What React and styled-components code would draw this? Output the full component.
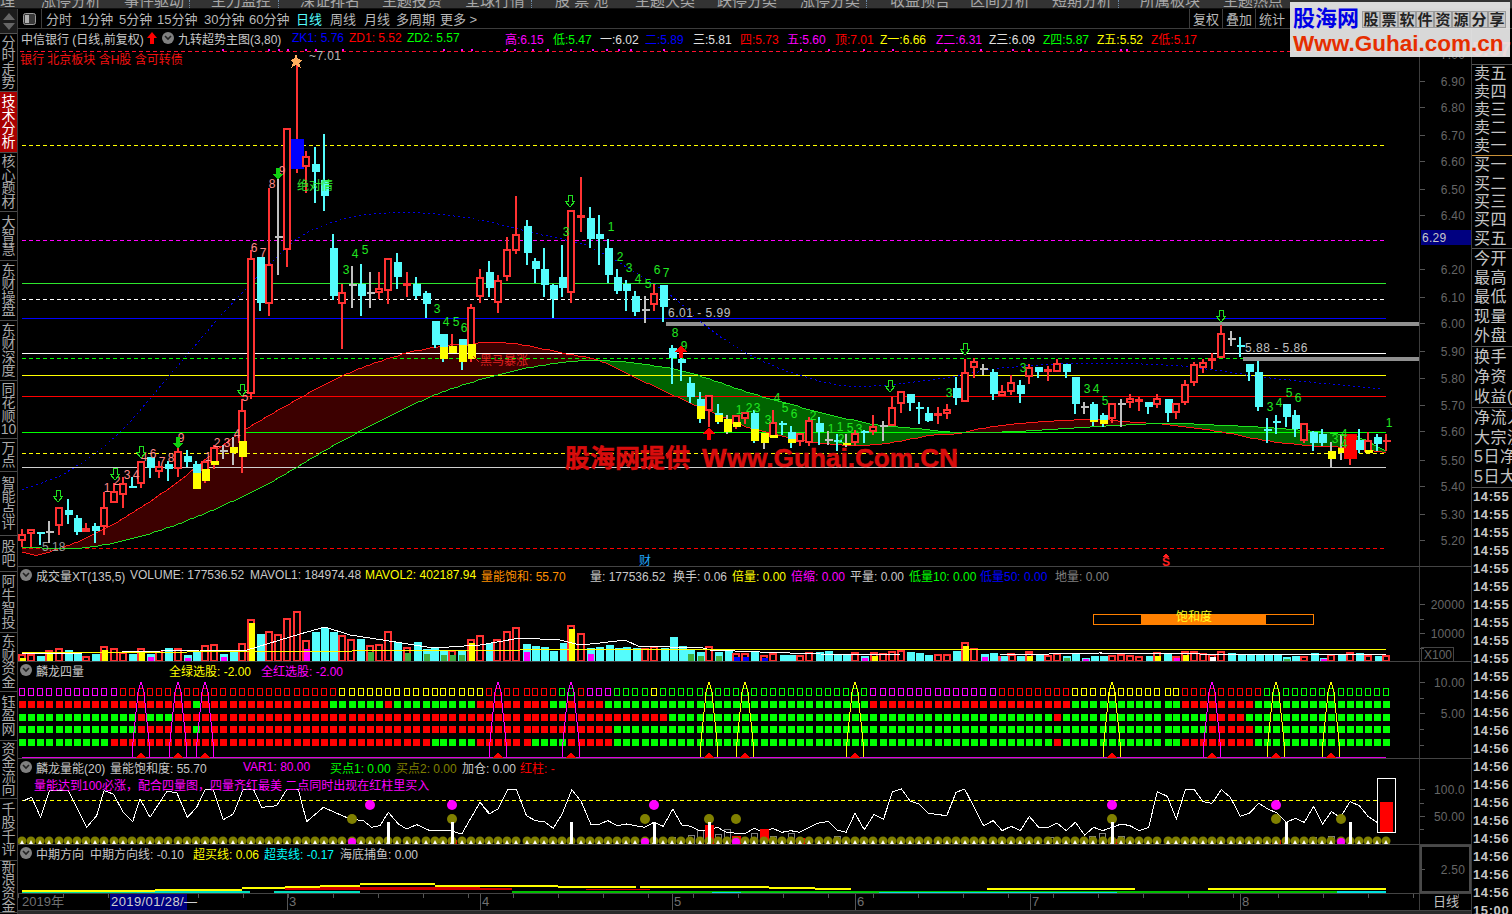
import React from 'react'
import styled, { createGlobalStyle } from 'styled-components'

const FONT = '"Liberation Sans", "Noto Sans CJK SC", sans-serif'

const GlobalStyle = createGlobalStyle`
    html, body {
        margin: 0;
        background: #000;
        overflow: hidden;
        font-family: ${FONT};
    }
`

const Screen = styled.div`
    width: 1512px;
    height: 914px;
    position: relative;
    display: flex;
    flex-direction: column;
    background: #000;
    overflow: hidden;
    color: #c0c0c0;
    font-size: 12px;
`

// top menu is cut by the window edge, only the lower half of the text shows
const TopMenu = styled.div`
    height: 8px;
    display: flex;
    background: #333;
    border-bottom: 1px solid #111;
    overflow: hidden;
    flex: none;
`

const MenuItem = styled.div`
    width: ${p => p.$w}px;
    flex: none;
    font-size: 15px;
    line-height: 15px;
    margin-top: -7px;
    color: #a8a8a8;
    white-space: nowrap;
`

const MenuDot = styled.div`
    width: ${p => p.$w}px;
    flex: none;
    border-left: 1px dotted #6a8aa8;
`

const Body = styled.div`
    flex: 1;
    display: flex;
    min-height: 0;
`

const LeftRail = styled.div`
    width: 17px;
    flex: none;
    border-right: 1px solid #3c3c3c;
    display: flex;
    flex-direction: column;
`

const RailArrows = styled.div`
    height: 24px;
    flex: none;
    background: #1c1c1c;
    border-bottom: 1px solid #555;
    display: flex;
    flex-direction: column;
    align-items: center;
    justify-content: center;
    gap: 3px;
`

const RailTab = styled.div`
    height: ${p => p.$h}px;
    flex: none;
    box-sizing: border-box;
    display: flex;
    flex-direction: column;
    align-items: center;
    justify-content: center;
    border-bottom: 1px solid #4a4a4a;
    background: ${p => (p.$active ? '#a80000' : '#000')};
    color: ${p => (p.$active ? '#fff' : '#a8a8a8')};
    font-size: 14px;
    line-height: 13.5px;
    overflow: hidden;
`

const Workspace = styled.div`
    flex: 1;
    display: flex;
    flex-direction: column;
    min-width: 0;
`

const Toolbar = styled.div`
    height: 19px;
    flex: none;
    box-sizing: content-box;
    display: flex;
    align-items: center;
    border-bottom: 1px solid #3c3c3c;
    background: #000;
    font-size: 13px;
    color: #b8b8b8;
`

const PanelToggle = styled.div`
    width: 23px;
    height: 100%;
    flex: none;
    display: flex;
    align-items: center;
    justify-content: center;
    border-right: 1px solid #3c3c3c;
`

const PeriodTab = styled.div`
    width: ${p => p.$w}px;
    flex: none;
    white-space: nowrap;
    color: ${p => (p.$active ? '#54fcfc' : '#b8b8b8')};
`

const ToolButton = styled.div`
    height: 100%;
    width: 33px;
    flex: none;
    box-sizing: border-box;
    display: flex;
    align-items: center;
    justify-content: center;
    border-left: 1px solid #3c3c3c;
    white-space: nowrap;
`

const Columns = styled.div`
    flex: 1;
    display: flex;
    min-height: 0;
`

const ChartColumn = styled.div`
    width: 1453px;
    flex: none;
    display: flex;
    flex-direction: column;
`

const Panel = styled.div`
    height: ${p => p.$h}px;
    flex: none;
    display: flex;
    box-sizing: border-box;
    border-bottom: 1px solid #444;
`

const PanelChart = styled.div`
    width: 1401px;
    flex: none;
    position: relative;
    overflow: hidden;
`

const PanelAxis = styled.div`
    width: 52px;
    flex: none;
    box-sizing: border-box;
    border-left: 1px solid #3c3c3c;
    overflow: hidden;
`

const ChartSvg = styled.svg`
    display: block;
    shape-rendering: crispEdges;
    font-family: ${FONT};
    font-size: 12px;
`

const Legend = styled.div`
    position: absolute;
    left: 0;
    top: ${p => p.$top || 0}px;
    height: 18px;
    display: flex;
    align-items: center;
    padding-left: ${p => p.$pad || 2}px;
    white-space: nowrap;
    font-size: 12px;
`

const LegendItem = styled.div`
    width: ${p => p.$w}px;
    flex: none;
    color: ${p => p.$c || '#c8c8c8'};
`

const Collapse = styled.span`
    width: 12px;
    height: 12px;
    flex: none;
    border-radius: 50%;
    background: #808080;
    display: inline-flex;
    align-items: center;
    justify-content: center;
    margin: 0 4px 0 ${p => p.$left || 0}px;
`

const TagLine = styled.div`
    position: absolute;
    left: 2px;
    top: 21px;
    color: #f01010;
    font-size: 12px;
    white-space: pre;
`

const DateBar = styled.div`
    height: 16px;
    flex: none;
    display: flex;
    align-items: center;
    border-bottom: 1px solid #444;
    background: repeating-linear-gradient(to right, #555 0 1px, transparent 1px 45px) top left / 100% 4px no-repeat;
    color: #707070;
    font-size: 13px;
`

const DateCell = styled.div`
    width: ${p => p.$w}px;
    height: 100%;
    flex: none;
    box-sizing: border-box;
    padding-left: ${p => p.$pad || 1}px;
    border-left: ${p => (p.$mark ? '1px solid #555' : '0')};
    line-height: 16px;
    white-space: nowrap;
`

const DateSelected = styled(DateCell)`
    background: #000080;
    color: #d0d0d0;
    letter-spacing: 0.4px;
`

const DatePeriod = styled(DateCell)`
    border-left: 1px solid #3c3c3c;
    color: #c0c0c0;
    text-align: center;
`

const BottomStrip = styled.div`
    flex: 1;
    background: #2a2a2a;
`

const QuoteColumn = styled.div`
    width: 41px;
    flex: none;
    box-sizing: border-box;
    border-left: 1px solid #3c3c3c;
    display: flex;
    flex-direction: column;
    overflow: hidden;
    font-size: 16px;
    color: #c4c4c4;
`

const QuotePrice = styled.div`
    height: 36px;
    flex: none;
    box-sizing: border-box;
    padding-top: 8px;
    font-size: 20px;
    font-weight: bold;
    line-height: 24px;
    color: #ff3030;
    border-bottom: 1px solid #555;
`

const QuoteGroup = styled.div`
    flex: none;
    box-sizing: border-box;
    height: ${p => p.$h}px;
    border-bottom: 1px solid ${p => p.$line || '#555'};
    display: flex;
    flex-direction: column;
    justify-content: space-around;
    padding-left: 2px;
`

const QuoteRow = styled.div`
    white-space: nowrap;
    line-height: 18px;
    letter-spacing: 0.5px;
`

const TimeRow = styled.div`
    height: 18px;
    flex: none;
    line-height: 18px;
    padding-left: 1px;
    font-size: 13px;
    font-weight: bold;
    letter-spacing: 0.6px;
    color: #c8c8c8;
`

const LogoBadge = styled.div`
    position: absolute;
    left: 1290px;
    top: 2px;
    width: 220px;
    height: 55px;
    box-sizing: border-box;
    padding: 5px 0 0 3px;
    background: rgba(232, 232, 232, 0.93);
    overflow: hidden;
    z-index: 5;
`

const LogoTop = styled.div`
    display: flex;
    align-items: center;
    height: 24px;
`

const LogoName = styled.div`
    width: 69px;
    flex: none;
    font-size: 22px;
    line-height: 24px;
    font-weight: bold;
    color: #0000e6;
    white-space: nowrap;
`

const LogoChar = styled.div`
    width: 18px;
    height: 17px;
    flex: none;
    box-sizing: border-box;
    border: 1px solid #9a9a9a;
    background: #c8c8c8;
    color: #222;
    font-size: 15px;
    line-height: 15px;
    font-weight: bold;
    text-align: center;
`

const LogoUrl = styled.div`
    font-size: 22.5px;
    line-height: 26px;
    font-weight: bold;
    color: #e62e00;
    white-space: nowrap;
`

// x, high, body top, body bottom, low, kind, split
const CANDLES = [
    [22, 529, 534, 541, 547, 'r'], [31, 529, 529, 534, 547, 'r'], [40, 532, 532, 534, 545, 'c'],
    [49, 521, 532, 532, 543, 'd'], [59, 507, 507, 526, 535, 'r'], [68, 499, 510, 515, 524, 'c'],
    [77, 515, 518, 532, 535, 'c'], [86, 523, 528, 532, 532, 'r'], [95, 523, 526, 531, 543, 'c'],
    [104, 492, 507, 527, 535, 'r'], [114, 483, 491, 503, 503, 'r'], [123, 477, 483, 495, 508, 'r'],
    [132, 477, 486, 488, 488, 'c'], [141, 461, 461, 484, 488, 'r'], [150, 457, 457, 468, 478, 'c'],
    [159, 461, 466, 472, 478, 'r'], [168, 461, 464, 469, 481, 'c'], [178, 445, 451, 469, 477, 'r'],
    [187, 450, 456, 462, 467, 'c'], [196, 461, 464, 489, 489, 'cy', 473], [205, 461, 461, 481, 483, 'ry', 469],
    [214, 445, 447, 465, 469, 'ry', 461], [223, 445, 451, 451, 459, 'd'], [233, 437, 447, 453, 465, 'y'],
    [242, 399, 410, 457, 473, 'ry', 441], [251, 250, 258, 394, 399, 'r'], [260, 257, 257, 303, 311, 'c'],
    [269, 188, 264, 304, 316, 'r'], [278, 175, 237, 237, 275, 'd'], [287, 128, 128, 250, 267, 'r'],
    [297, 63, 139, 169, 173, 'B'], [306, 151, 156, 167, 193, 'r'], [315, 147, 164, 172, 203, 'c'],
    [324, 134, 180, 196, 211, 'c'], [333, 234, 248, 296, 300, 'c'], [342, 284, 292, 304, 349, 'r'],
    [352, 266, 285, 285, 308, 'd'], [361, 264, 284, 296, 316, 'c'], [370, 272, 293, 293, 308, 'd'],
    [379, 272, 288, 293, 299, 'r'], [388, 258, 258, 291, 304, 'r'], [397, 253, 262, 277, 289, 'c'],
    [407, 272, 283, 285, 297, 'r'], [416, 277, 284, 296, 299, 'c'], [426, 291, 293, 304, 318, 'c'],
    [435, 321, 321, 345, 348, 'c'], [443, 334, 334, 359, 362, 'cy', 347], [452, 334, 346, 353, 353, 'ry', 346],
    [462, 339, 339, 362, 370, 'cy', 345], [471, 304, 307, 359, 362, 'ry', 344], [480, 269, 277, 297, 303, 'r'],
    [489, 261, 272, 288, 297, 'c'], [498, 275, 280, 303, 313, 'r'], [507, 237, 249, 277, 281, 'r'],
    [516, 196, 234, 251, 254, 'r'], [527, 220, 226, 253, 265, 'c'], [535, 258, 261, 269, 283, 'c'],
    [544, 248, 269, 285, 297, 'c'], [553, 284, 285, 299, 318, 'c'], [562, 245, 277, 288, 297, 'c'],
    [571, 210, 210, 293, 303, 'r'], [581, 177, 215, 218, 232, 'r'], [590, 207, 218, 239, 248, 'c'],
    [599, 215, 234, 239, 265, 'c'], [608, 239, 248, 275, 283, 'c'], [617, 269, 277, 291, 294, 'c'],
    [626, 280, 284, 291, 311, 'c'], [635, 291, 296, 312, 316, 'c'], [645, 296, 310, 310, 323, 'd'],
    [654, 284, 293, 305, 311, 'r'], [663, 285, 285, 307, 322, 'c'], [672, 345, 348, 358, 384, 'c'],
    [681, 350, 359, 363, 381, 'c'], [690, 377, 383, 397, 403, 'c'], [700, 392, 399, 419, 423, 'cy', 406],
    [709, 395, 395, 411, 427, 'r'], [718, 404, 413, 422, 424, 'cy', 415], [727, 415, 419, 432, 434, 'y'],
    [736, 415, 415, 427, 429, 'ry', 422], [745, 412, 412, 419, 424, 'r'], [754, 410, 413, 441, 443, 'cy', 429],
    [764, 433, 433, 443, 449, 'y'], [773, 410, 422, 438, 438, 'ry', 435], [782, 421, 424, 424, 435, 'e'],
    [791, 426, 432, 443, 448, 'cy', 439], [800, 433, 433, 442, 446, 'r'], [809, 417, 420, 443, 446, 'r'],
    [819, 417, 423, 432, 445, 'c'], [828, 431, 440, 440, 445, 'd'], [837, 434, 441, 441, 451, 'e'],
    [846, 434, 443, 445, 447, 'y'], [855, 430, 433, 443, 446, 'r'], [864, 430, 432, 432, 443, 'e'],
    [873, 415, 426, 432, 435, 'r'], [883, 421, 426, 426, 441, 'd'], [892, 397, 407, 426, 426, 'r'],
    [901, 391, 391, 404, 413, 'r'], [910, 394, 394, 403, 411, 'c'], [919, 402, 408, 408, 424, 'e'],
    [928, 407, 413, 421, 422, 'c'], [938, 407, 413, 415, 424, 'r'], [947, 404, 409, 414, 419, 'r'],
    [956, 377, 388, 398, 405, 'c'], [965, 359, 372, 402, 402, 'r'], [974, 358, 361, 368, 378, 'r'],
    [983, 364, 369, 369, 375, 'd'], [993, 369, 372, 394, 400, 'c'], [1002, 385, 391, 396, 396, 'r'],
    [1011, 375, 382, 392, 395, 'r'], [1020, 380, 385, 394, 403, 'c'], [1029, 364, 367, 377, 384, 'r'],
    [1038, 367, 367, 372, 378, 'c'], [1048, 366, 369, 372, 381, 'r'], [1057, 359, 363, 372, 372, 'r'],
    [1066, 364, 364, 372, 378, 'c'], [1075, 377, 377, 404, 414, 'c'], [1084, 402, 407, 407, 414, 'd'],
    [1093, 402, 404, 422, 426, 'cy', 420], [1103, 413, 415, 424, 427, 'cy', 420], [1112, 403, 403, 419, 423, 'r'],
    [1121, 399, 404, 404, 427, 'd'], [1130, 394, 398, 403, 408, 'r'], [1139, 397, 399, 401, 411, 'r'],
    [1148, 402, 402, 407, 414, 'c'], [1157, 394, 398, 405, 408, 'r'], [1168, 399, 399, 413, 422, 'c'],
    [1176, 403, 403, 413, 419, 'r'], [1185, 380, 384, 403, 405, 'r'], [1194, 362, 364, 383, 386, 'r'],
    [1203, 359, 362, 368, 373, 'r'], [1212, 353, 358, 361, 369, 'r'], [1221, 325, 333, 358, 358, 'r'],
    [1231, 331, 339, 339, 346, 'd'], [1240, 337, 346, 346, 357, 'e'], [1249, 364, 364, 372, 381, 'c'],
    [1258, 361, 372, 407, 411, 'c'], [1267, 418, 430, 430, 443, 'e'], [1276, 415, 422, 422, 434, 'e'],
    [1286, 404, 404, 417, 427, 'c'], [1295, 410, 415, 429, 437, 'c'], [1304, 423, 423, 441, 443, 'r'],
    [1313, 431, 432, 443, 451, 'c'], [1322, 429, 434, 443, 446, 'c'], [1331, 442, 451, 459, 467, 'y'],
    [1341, 435, 448, 453, 460, 'y'], [1350, 434, 434, 459, 465, 'R'], [1359, 429, 440, 450, 453, 'c'],
    [1368, 432, 440, 453, 453, 'ry', 450], [1377, 434, 437, 444, 451, 'c'], [1386, 434, 441, 441, 451, 'D']
]

const XS = CANDLES.map(c => c[0])

const RED = '#ff3232'
const CYAN = '#54fcfc'

const Candle = ({ data }) => {
    const [x, high, top, bottom, low, kind, split] = data
    if (kind === 'd' || kind === 'e' || kind === 'D') {
        const color = kind === 'd' ? '#c0c0c0' : kind === 'e' ? CYAN : RED
        return (
            <g fill={color}>
                <rect x={x - 1} y={high} width={2} height={low - high} />
                <rect x={x - 3} y={top - 1} width={8} height={2} />
            </g>
        )
    }
    if (kind === 'B' || kind === 'R') {
        return (
            <g>
                <rect x={x - 1} y={high} width={2} height={low - high} fill={RED} />
                <rect x={x - 6} y={top} width={13} height={bottom - top} fill={kind === 'B' ? '#0000ff' : '#ff0000'} />
            </g>
        )
    }
    const isRed = kind === 'r' || kind === 'ry'
    return (
        <g>
            <rect x={x - 1} y={high} width={2} height={low - high} fill={kind === 'y' ? '#c0c0c0' : isRed ? RED : CYAN} />
            {kind === 'r' && <rect x={x - 3} y={top + 1} width={6} height={Math.max(bottom - top - 2, 1)} fill="#000" stroke={RED} strokeWidth={2} />}
            {kind === 'c' && <rect x={x - 3} y={top} width={8} height={bottom - top} fill={CYAN} />}
            {kind === 'y' && <rect x={x - 3} y={top} width={8} height={bottom - top} fill="#ffff00" />}
            {kind === 'cy' && (
                <g>
                    <rect x={x - 3} y={top} width={8} height={split - top} fill={CYAN} />
                    <rect x={x - 3} y={split} width={8} height={bottom - split} fill="#ffff00" />
                </g>
            )}
            {kind === 'ry' && (
                <g>
                    <rect x={x - 3} y={top + 1} width={6} height={split - top} fill="#000" stroke={RED} strokeWidth={2} />
                    <rect x={x - 3} y={split} width={8} height={bottom - split} fill="#ffff00" />
                </g>
            )}
        </g>
    )
}

const H_LINES = [
    [145, '#ffff00', true], [240, '#ff00ff', true], [283, '#2ee62e'], [299, '#ffffff', true],
    [318, '#0000ff'], [353, '#ffffff'], [358, '#00ff00', true], [375, '#ffff00'], [396, '#ff0000'],
    [432, '#00ff00'], [453, '#ffff00', true], [467, '#d0d0d0'], [548, '#ff0000', true]
]

const MA_BLUE = [[22, 490], [67, 472], [117, 435], [170, 375], [217, 320], [267, 267], [300, 237], [340, 220], [380, 213], [430, 213], [480, 220], [530, 232], [590, 247], [647, 280], [680, 303], [707, 327], [750, 355], [793, 373], [840, 385], [883, 385], [950, 377], [1000, 368], [1077, 363], [1173, 365], [1223, 371], [1263, 377], [1323, 383], [1385, 389]]
const MA_RED = [[22, 552], [38, 555], [97, 533], [167, 490], [233, 438], [300, 398], [340, 377], [390, 358], [430, 348], [470, 343], [510, 343], [563, 353], [597, 360], [630, 375], [677, 397], [730, 420], [750, 428], [800, 440], [850, 445], [887, 443], [933, 435], [960, 433], [983, 428], [1033, 422], [1100, 419], [1123, 421], [1163, 424], [1223, 432], [1263, 440], [1307, 445], [1357, 448], [1387, 453]]
const MA_GREEN = [[22, 547], [90, 547], [167, 528], [260, 488], [340, 442], [430, 397], [490, 377], [543, 365], [597, 360], [663, 367], [700, 376], [750, 393], [800, 407], [867, 423], [913, 428], [960, 432], [1017, 431], [1100, 426], [1167, 423], [1223, 425], [1277, 428], [1357, 437], [1387, 452]]

const toPoints = pts => pts.map(p => p.join(',')).join(' ')

// hermite through the read-off points, the moving averages are smooth curves
const curveAt = (pts, x) => {
    let i = 1
    while (i < pts.length - 1 && x > pts[i][0]) i++
    const [x0, y0] = pts[i - 1]
    const [x1, y1] = pts[i]
    const prev = pts[Math.max(i - 2, 0)]
    const next = pts[Math.min(i + 1, pts.length - 1)]
    const m0 = (y1 - prev[1]) / (x1 - prev[0])
    const m1 = (next[1] - y0) / (next[0] - x0)
    const w = x1 - x0
    const t = Math.min(Math.max((x - x0) / w, 0), 1)
    const t2 = t * t
    const t3 = t2 * t
    return (2 * t3 - 3 * t2 + 1) * y0 + (t3 - 2 * t2 + t) * w * m0 + (-2 * t3 + 3 * t2) * y1 + (t3 - t2) * w * m1
}

const sample = (pts, from, to) => {
    const out = []
    for (let x = from; x <= to; x += 4) out.push([x, Math.round(curveAt(pts, x))])
    return out
}

const ribbon = (from, to) => {
    const top = sample(MA_RED, from, to)
    const bottom = sample(MA_GREEN, from, to).reverse()
    return toPoints(top.concat(bottom))
}

const RIBBONS = [[22, 598, '#3c0000'], [598, 960, '#006400'], [960, 1166, '#3c0000'], [1166, 1386, '#006400']]

const GREEN_LABELS = [
    [355, 253, '4'], [365, 249, '5'], [346, 269, '3'], [437, 308, '3'], [446, 321, '4'], [456, 321, '5'], [464, 327, '6'],
    [566, 231, '3'], [611, 226, '1'], [620, 256, '2'], [629, 267, '3'], [638, 278, '4'], [648, 283, '5'], [657, 269, '6'],
    [666, 272, '7'], [675, 332, '8'], [684, 345, '9'], [739, 409, '1'], [749, 407, '2'], [757, 407, '3'], [768, 419, '3'],
    [777, 397, '4'], [785, 407, '5'], [794, 413, '6'], [813, 415, '2'], [831, 428, '1'], [840, 426, '1'], [841, 438, '2'],
    [850, 427, '5'], [859, 428, '3'], [949, 392, '3'], [1023, 367, '3'], [1087, 388, '3'], [1096, 388, '4'], [1105, 400, '5'],
    [1270, 406, '3'], [1279, 402, '4'], [1289, 392, '5'], [1298, 397, '6'], [1335, 438, '3'], [1344, 433, '4'], [1344, 443, '4'],
    [1389, 422, '1']
]

const PINK_LABELS = [
    [107, 487, '1'], [117, 480, '2'], [127, 474, '3'], [136, 474, '4'], [144, 456, '4'], [153, 453, '6'], [162, 461, '7'],
    [171, 457, '8'], [181, 437, '9'], [208, 456, '1'], [217, 442, '2'], [227, 442, '3'], [237, 433, '4'], [245, 396, '5'],
    [254, 247, '6'], [263, 252, '7'], [272, 183, '8'], [282, 170, '9']
]

const HOLLOW_ARROWS = [[58, 497], [115, 475], [141, 453], [242, 391], [570, 202], [965, 350], [890, 387], [1221, 317]]
const FILLED_ARROWS = [[178, 444], [278, 175]]
const UP_ARROWS = [[681, 351], [709, 433]]
const TOP_DOTS = [222, 268, 278, 287, 305, 315, 342, 443, 461, 471, 506, 514, 532, 547, 570, 592, 606, 618, 630, 663, 800, 828, 863, 892, 945, 980, 1012, 1028, 1080, 1120, 1126]

const arrowDown = (x, y) => `${x - 2},${y - 7} ${x + 2},${y - 7} ${x + 2},${y - 1} ${x + 5},${y - 1} ${x},${y + 5} ${x - 5},${y - 1} ${x - 2},${y - 1}`
const arrowUp = (x, y) => `${x},${y - 6} ${x + 6},${y + 1} ${x + 2},${y + 1} ${x + 2},${y + 7} ${x - 2},${y + 7} ${x - 2},${y + 1} ${x - 6},${y + 1}`

const MainChart = () => (
    <ChartSvg width={1401} height={537} viewBox="18 29 1401 537">
        {RIBBONS.map(r => <polygon key={r[0]} points={ribbon(r[0], r[1])} fill={r[2]} />)}
        <line x1={20} x2={1418} y1={51} y2={51} stroke="#ff1030" strokeDasharray="4 3" />
        {TOP_DOTS.map(x => <rect key={x} x={x} y={49} width={2} height={2} fill="#ff00ff" />)}
        {H_LINES.map(l => (
            <line key={l[0]} x1={22} x2={1386} y1={l[0] + 0.5} y2={l[0] + 0.5} stroke={l[1]} strokeDasharray={l[2] ? '4 3' : undefined} />
        ))}
        <rect x={666} y={322} width={753} height={4} fill="#909090" />
        <rect x={1243} y={357} width={176} height={4} fill="#909090" />
        <polyline points={toPoints(sample(MA_BLUE, 22, 1385))} fill="none" stroke="#0000e8" strokeDasharray="2 3" />
        <polyline points={toPoints(sample(MA_RED, 22, 1386))} fill="none" stroke="#ff1818" />
        <polyline points={toPoints(sample(MA_GREEN, 22, 1386))} fill="none" stroke="#20e020" />
        {CANDLES.map(c => <Candle key={c[0]} data={c} />)}
        {GREEN_LABELS.map(l => <text key={`${l[0]}-${l[1]}`} x={l[0]} y={l[1] + 5} textAnchor="middle" fill="#20e820">{l[2]}</text>)}
        {PINK_LABELS.map(l => <text key={`${l[0]}-${l[1]}`} x={l[0]} y={l[1] + 5} textAnchor="middle" fill="#ff8a8a">{l[2]}</text>)}
        {HOLLOW_ARROWS.map(a => <polygon key={a[0]} points={arrowDown(a[0], a[1])} fill="#000" stroke="#20e020" />)}
        {FILLED_ARROWS.map(a => <polygon key={a[0]} points={arrowDown(a[0], a[1])} fill="#10d010" />)}
        {UP_ARROWS.map(a => <polygon key={a[0]} points={arrowUp(a[0], a[1])} fill="#ff0000" />)}
        <text x={668} y={317} fill="#c0c0c0" letterSpacing="0.5">6.01 - 5.99</text>
        <text x={1245} y={352} fill="#c0c0c0" letterSpacing="0.5">5.88 - 5.86</text>
        <text x={297} y={190} fill="#30e830">绝对情</text>
        <polyline points="473,356 479,362" fill="none" stroke="#e02020" />
        <text x={480} y={365} fill="#e02020">黑马暴涨</text>
        <polygon points="296,54 298,59 302,60 299,63 301,68 296,65 291,68 293,63 290,60 294,59" fill="#ffb060" />
        <text x={309} y={60} fill="#b8b8b8" letterSpacing="0.4">~7.01</text>
        <text x={42} y={551} fill="#9a9a9a">5.18</text>
        <text x={565} y={467} fontSize="25" fontWeight="bold" fill="#d80c0c" stroke="#d80c0c" strokeWidth="0.5" textLength="125" lengthAdjust="spacingAndGlyphs">股海网提供</text>
        <text x={702} y={467} fontSize="26" fontWeight="bold" fill="#d80c0c" stroke="#d80c0c" strokeWidth="0.5" textLength="256" lengthAdjust="spacingAndGlyphs">Www.Guhai.Com.CN</text>
        <text x={639} y={565} fill="#20a8ff">财</text>
        <polygon points="1166,553 1169,557 1163,557" fill="#ff2020" />
        <text x={1166} y={566} textAnchor="middle" fill="#ff2020" fontWeight="bold">S</text>
    </ChartSvg>
)

// bars are read off three crops of the volume pane, each with its own offset
const fromLeft = [
    [67, 283, 'ry'], [93, 283, 'r'], [121, 290, 'c'], [148, 273, 'ry'], [177, 267, 'r'], [205, 273, 'c'], [232, 285, 'c'], [258, 290, 'r'],
    [286, 285, 'c'], [312, 261, 'ry'], [342, 267, 'r'], [369, 278, 'r'], [397, 285, 'c'], [424, 267, 'ry'], [451, 283, 'cm'], [478, 276, 'r'],
    [505, 265, 'c'], [534, 267, 'r'], [562, 287, 'cm'], [589, 275, 'c'], [616, 258, 'r'], [643, 255, 'r'], [670, 283, 'cm'], [700, 275, 'c'],
    [726, 252, 'r'], [753, 180, 'ry'], [781, 225, 'c'], [807, 215, 'r'], [834, 225, 'r'], [861, 177, 'r'], [890, 155, 'r'], [918, 242, 'rm'],
    [946, 217, 'c'], [972, 207, 'c'], [1000, 218, 'c'], [1027, 228, 'r'], [1054, 240, 'r'], [1081, 238, 'c'], [1110, 258, 'rg'], [1136, 255, 'r'],
    [1164, 215, 'r'], [1190, 248, 'c'], [1220, 263, 'rg'], [1250, 248, 'c'], [1277, 268, 'cg'], [1303, 263, 'c'], [1330, 275, 'cg'], [1356, 272, 'rg'],
    [1383, 275, 'cg'], [1412, 240, 'ry'], [1440, 228, 'r'], [1468, 250, 'c'], [1492, 240, 'r']
].map(b => [b[0] / 3, (305 - b[1]) / 3, b[2]])

const fromMiddle = [
    [75, 95, 'r'], [100, 85, 'r'], [130, 135, 'cm'], [155, 140, 'c'], [180, 145, 'c'], [205, 155, 'c'], [232, 132, 'c'], [255, 77, 'ry'], [283, 103, 'r'],
    [309, 147, 'cm'], [334, 144, 'c'], [360, 138, 'c'], [385, 147, 'c'], [410, 143, 'c'], [436, 146, 'c'], [461, 148, 'r'], [487, 142, 'r'], [514, 148, 'c'],
    [539, 114, 'c'], [565, 142, 'c'], [589, 150, 'cg'], [617, 158, 'cg'], [641, 142, 'r'], [667, 158, 'cg'], [693, 157, 'c'], [717, 162, 'rb'], [742, 162, 'rb'],
    [768, 159, 'c'], [795, 168, 'rb'], [820, 163, 'r'], [847, 167, 'c'], [872, 167, 'c'], [896, 167, 'r'], [921, 160, 'r'], [950, 159, 'c'], [975, 156, 'c'],
    [1000, 168, 'c'], [1025, 168, 'c'], [1050, 160, 'r'], [1076, 171, 'cm'], [1103, 160, 'ry'], [1128, 163, 'r'], [1153, 155, 'r'], [1178, 154, 'r'], [1205, 160, 'c'],
    [1230, 163, 'c'], [1255, 168, 'c'], [1283, 166, 'r'], [1307, 166, 'r'], [1333, 156, 'c'], [1357, 130, 'ry'], [1383, 148, 'r'], [1410, 165, 'cm'], [1437, 162, 'c'],
    [1462, 170, 'rm'], [1487, 163, 'r'], [1513, 170, 'c'], [1537, 157, 'ry']
].map(b => [480 + b[0] / 2.8, (186 - b[1]) / 3, b[2]])

const fromRight = [
    [-25, 290, 'c'], [0, 285, 'r'], [25, 290, 'c'], [52, 277, 'ry'], [80, 288, 'c'], [108, 288, 'r'], [135, 280, 'r'], [163, 291, 'cg'], [190, 282, 'c'], [218, 295, 'cm'],
    [245, 290, 'c'], [272, 290, 'c'], [300, 288, 'r'], [328, 284, 'r'], [354, 288, 'r'], [381, 290, 'r'], [410, 290, 'c'], [436, 278, 'ry'], [466, 283, 'c'],
    [493, 291, 'rm'], [520, 276, 'ry'], [547, 275, 'r'], [573, 282, 'r'], [600, 283, 'rw'], [628, 275, 'r'], [658, 280, 'c'], [686, 288, 'c'], [713, 288, 'c'],
    [741, 283, 'c'], [768, 286, 'c'], [795, 286, 'c'], [823, 292, 'cg'], [850, 289, 'c'], [877, 290, 'r'], [905, 282, 'c'], [932, 295, 'cm'], [958, 285, 'r'],
    [988, 288, 'c'], [1014, 278, 'r'], [1042, 282, 'c'], [1068, 287, 'r'], [1097, 289, 'c'], [1122, 288, 'r']
].map(b => [1012 + b[0] / 3, (305 - b[1]) / 3, b[2]])

const VOLUMES = [...fromLeft, ...fromMiddle, ...fromRight]

const INNER = { y: '#ffff00', m: '#ff00ff', g: '#40b040', b: '#0000ff', w: '#ffffff' }
const VOL_BOTTOM = 661

const VolumeBar = ({ x: rawX, h, kind }) => {
    const x = Math.round(rawX)
    const y = Math.round(VOL_BOTTOM - h)
    const bar = VOL_BOTTOM - y
    const inner = kind[1]
    const innerH = inner === 'y' ? Math.max(bar - 4, 2) : Math.round(Math.max(bar * 0.55, 2))
    return (
        <g>
            {kind[0] === 'c'
                ? <rect x={x - 3} y={y} width={8} height={bar} fill={CYAN} />
                : <rect x={x - 3} y={y + 1} width={6} height={Math.max(bar - 1, 1)} fill="#000" stroke={RED} strokeWidth={2} />}
            {inner && <rect x={x - 2} y={VOL_BOTTOM - innerH} width={6} height={innerH} fill={INNER[inner]} />}
        </g>
    )
}

const VOL_WHITE = [[22, 654], [83, 653], [200, 650], [247, 650], [300, 634], [325, 627], [350, 635], [383, 640], [433, 648], [480, 645], [520, 638], [540, 639], [560, 640], [580, 645], [600, 643], [625, 640], [640, 647], [660, 646], [680, 648], [700, 647], [710, 650], [760, 652], [820, 654], [900, 655], [1000, 655], [1100, 653], [1200, 654], [1386, 655]]

const VolumeChart = () => (
    <ChartSvg width={1401} height={94} viewBox="18 567 1401 94">
        {VOLUMES.map((b, i) => <VolumeBar key={i} x={b[0]} h={b[1]} kind={b[2]} />)}
        <polyline points={toPoints(VOL_WHITE)} fill="none" stroke="#ffffff" />
        <polyline points="22,653 520,650 1386,649" fill="none" stroke="#ffff00" />
        <rect x={1093.5} y={614.5} width={220} height={10} fill="#000" stroke="#ff8000" />
        <rect x={1141} y={615} width={125} height={9} fill="#ff8000" />
        <text x={1194} y={621} textAnchor="middle" fill="#ffff20">饱和度</text>
    </ChartSvg>
)

const MAGENTA = '#ff00ff'
const GREEN = '#00ff00'
const RED_CELL = '#ff0000'
const YELLOW = '#ffff00'

// colour bands by x, each pair is [up to x, colour]
const band = (stops, x) => stops.find(s => x < s[0])[1]

const GRID_ROWS = [
    { y: 689, hollow: true, stops: [[118, MAGENTA], [338, RED_CELL], [485, YELLOW], [558, RED_CELL], [577, GREEN], [586, RED_CELL], [613, MAGENTA], [650, GREEN], [658, YELLOW], [869, GREEN], [998, MAGENTA], [1071, RED_CELL], [1181, YELLOW], [1262, RED_CELL], [9999, GREEN]] },
    { y: 701, stops: [[192, RED_CELL], [201, GREEN], [330, RED_CELL], [385, GREEN], [392, RED_CELL], [476, GREEN], [549, RED_CELL], [567, GREEN], [604, RED_CELL], [869, GREEN], [1071, RED_CELL], [1181, GREEN], [1253, RED_CELL], [9999, GREEN]] },
    { y: 714, stops: [[137, GREEN], [146, RED_CELL], [172, GREEN], [668, RED_CELL], [1053, GREEN], [1061, RED_CELL], [1208, GREEN], [1244, RED_CELL], [9999, GREEN]] },
    { y: 726, stops: [[137, GREEN], [192, RED_CELL], [201, GREEN], [613, RED_CELL], [1208, GREEN], [1253, RED_CELL], [9999, GREEN]] },
    { y: 739, stops: [[112, GREEN], [431, RED_CELL], [476, GREEN], [532, RED_CELL], [567, GREEN], [613, RED_CELL], [1053, GREEN], [1061, RED_CELL], [1181, GREEN], [1253, RED_CELL], [9999, GREEN]] }
]

const PEAKS = [[141, MAGENTA], [178, MAGENTA], [205, MAGENTA], [498, MAGENTA], [571, MAGENTA], [709, YELLOW], [745, YELLOW], [855, YELLOW], [1112, YELLOW], [1212, MAGENTA], [1276, YELLOW], [1331, YELLOW]]

const peakOutline = x => [[x - 9, 757], [x - 8, 742], [x - 6, 722], [x - 4, 703], [x - 3, 692], [x, 682], [x + 3, 692], [x + 4, 703], [x + 6, 722], [x + 8, 742], [x + 9, 757]]

const FourChart = () => (
    <ChartSvg width={1401} height={96} viewBox="18 662 1401 96">
        {GRID_ROWS.map(row => XS.map(x => (
            row.hollow
                ? <rect key={x} x={x - 2.5} y={row.y - 0.5} width={5} height={7} fill="none" stroke={band(row.stops, x)} strokeWidth={1.5} />
                : <rect key={x} x={x - 3} y={row.y} width={7} height={7} fill={band(row.stops, x)} />
        )))}
        {PEAKS.map(p => <polyline key={p[0]} points={toPoints(peakOutline(p[0]))} fill="none" stroke={p[1]} />)}
        <line x1={22} x2={1386} y1={757.5} y2={757.5} stroke="#e000e0" />
        {PEAKS.map(p => <polygon key={p[0]} points={`${p[0]},752 ${p[0] + 5},758 ${p[0] - 5},758`} fill="#ff0000" />)}
    </ChartSvg>
)

const ENERGY_LEFT = [[68, 726], [95, 715], [122, 775], [148, 695], [205, 695], [260, 805], [290, 770], [312, 695], [340, 705], [370, 760], [398, 788], [420, 720], [450, 775], [500, 698], [530, 700], [562, 775], [590, 745], [615, 692], [640, 692], [670, 782], [700, 765], [730, 690], [760, 690], [785, 745], [830, 740], [860, 692], [895, 692], [920, 788], [970, 745], [1050, 780], [1090, 785], [1115, 805], [1140, 800], [1165, 760], [1195, 795], [1220, 810], [1250, 797], [1290, 815], [1350, 815], [1385, 825], [1440, 730], [1470, 765]].map(p => [p[0] / 3, 560 + p[1] / 3])
const ENERGY_MID = [[0, 100], [25, 135], [50, 120], [78, 62], [102, 62], [130, 140], [155, 155], [180, 158], [205, 178], [230, 135], [257, 62], [283, 97], [310, 165], [335, 165], [358, 155], [385, 170], [410, 165], [460, 175], [487, 160], [513, 172], [540, 120], [565, 168], [590, 172], [615, 185], [640, 183], [665, 175], [690, 190], [740, 195], [768, 178], [795, 190], [820, 178], [845, 190], [870, 185], [895, 190], [945, 163], [975, 157], [1000, 183], [1025, 190], [1050, 133], [1076, 182], [1103, 137], [1130, 150], [1155, 68], [1180, 60], [1205, 97], [1230, 105], [1255, 133], [1307, 140], [1333, 70], [1357, 60], [1410, 170], [1437, 155], [1462, 185], [1487, 172], [1513, 185]].map(p => [480 + p[0] / 2.8, 770 + p[1] / 3])
const ENERGY_RIGHT = [[25, 815], [52, 772], [80, 805], [108, 805], [135, 792], [163, 815], [190, 790], [218, 828], [245, 805], [272, 815], [300, 805], [328, 795], [354, 800], [381, 815], [410, 805], [436, 698], [466, 712], [493, 780], [520, 692], [547, 692], [573, 728], [600, 733], [628, 692], [655, 715], [685, 772], [713, 762], [740, 733], [768, 750], [795, 762], [823, 790], [850, 778], [877, 790], [905, 742], [932, 795], [958, 758], [985, 775], [1014, 728], [1042, 740], [1068, 772], [1095, 790]].map(p => [1012 + p[0] / 3, 560 + p[1] / 3])
const ENERGY_LINE = [...ENERGY_LEFT, ...ENERGY_MID, ...ENERGY_RIGHT]

const STICKS = [388, 452, 571, 654, 709, 1112, 1286, 1350]
const MAGENTA_DOTS = [370, 452, 654, 1112, 1276]
const OLIVE_DOTS = [352, 452, 645, 709, 736, 1112, 1276, 1341]
const LOW_DOTS = [352, 645, 736, 1341]
const GREY_BOXES = [[672, 838], [691, 836], [700, 831], [718, 835], [727, 830], [754, 834], [773, 837], [791, 834], [837, 837], [1092, 837], [1102, 834], [1121, 837], [1313, 838], [1331, 837], [1050, 838]]
const RED_BLOCKS = [[709, 826, 19], [736, 837, 8], [764, 830, 12], [800, 839, 6], [452, 841, 4], [1112, 840, 5], [1276, 841, 4]]

const EnergyChart = () => (
    <ChartSvg width={1401} height={85} viewBox="18 760 1401 85">
        <line x1={22} x2={1386} y1={801.5} y2={801.5} stroke="#ffff00" strokeDasharray="4 3" />
        {GREY_BOXES.map(b => <rect key={b[0]} x={b[0] - 3} y={b[1]} width={6} height={845 - b[1]} fill="none" stroke="#808080" />)}
        <polyline points={toPoints(ENERGY_LINE)} fill="none" stroke="#ffffff" />
        {RED_BLOCKS.map(b => <rect key={b[0]} x={b[0] - 4} y={b[1]} width={9} height={b[2]} fill="#ff0000" />)}
        <g shapeRendering="auto">
            {XS.map(x => <circle key={x} cx={x} cy={842} r={4.5} fill="#808000" />)}
            {XS.map(x => <polygon key={x} points={`${x},841 ${x + 2},845 ${x - 2},845`} fill="#ffffff" />)}
            {MAGENTA_DOTS.map(x => <circle key={x} cx={x} cy={806} r={5} fill="#ff00ff" />)}
            {OLIVE_DOTS.map(x => <circle key={x} cx={x} cy={820} r={5} fill="#808000" />)}
            {LOW_DOTS.map(x => <circle key={x} cx={x} cy={843} r={4} fill="#ff00ff" />)}
        </g>
        {STICKS.map(x => <rect key={x} x={x - 1} y={823} width={3} height={22} fill="#ffffff" />)}
        <rect x={1377.5} y={779.5} width={18} height={54} fill="#000" stroke="#ffffff" />
        <rect x={1380} y={803} width={13} height={30} fill="#ff0000" />
        <text x={34} y={791} fill="#ff00ff">量能达到100必涨，配合四量图，四量齐红最美 二点同时出现在红柱里买入</text>
    </ChartSvg>
)

const DIR_BANDS = [
    [22, 137, 892, 1, '#00e0a0'], [137, 250, 892, 1, '#00e0c0'], [274, 360, 892, 1, '#00e0c0'],
    [512, 1386, 892, 1, '#00c000'], [712, 741, 893, 1, '#00e0e0'], [741, 879, 893, 1, '#00d020'],
    [879, 1117, 893, 1, '#00e0e0'], [1117, 1337, 892, 1, '#00c000'], [1337, 1386, 892, 1, '#00e0e0']
]
const DIR_YELLOW = [
    [22, 155, 892], [155, 242, 891], [242, 285, 889], [285, 320, 888], [320, 360, 887], [360, 435, 885], [435, 500, 887],
    [500, 558, 887], [558, 636, 888], [640, 769, 888], [769, 815, 889], [815, 851, 890], [987, 1135, 890], [1208, 1386, 890]
]
const DIR_RED = [[285, 500, 889, 2], [500, 512, 889, 2], [586, 650, 890, 1], [320, 480, 888, 3]]

const DirectionChart = () => (
    <ChartSvg width={1401} height={48} viewBox="18 846 1401 48">
        {DIR_RED.map(b => <rect key={b[0]} x={b[0]} y={b[2]} width={b[1] - b[0]} height={b[3]} fill="#d00000" />)}
        {DIR_BANDS.map(b => <rect key={b[0]} x={b[0]} y={b[2]} width={b[1] - b[0]} height={2} fill={b[4]} />)}
        {DIR_YELLOW.map(b => <rect key={b[0]} x={b[0]} y={b[2] - 1} width={b[1] - b[0]} height={2} fill="#ffff00" />)}
    </ChartSvg>
)

const AxisTicks = ({ top, height, ticks, minor = [], children }) => (
    <ChartSvg width={52} height={height} viewBox={`1419 ${top} 52 ${height}`}>
        {minor.map(y => <line key={y} x1={1419} x2={1423} y1={y + 0.5} y2={y + 0.5} stroke="#555" />)}
        {ticks.map(t => (
            <g key={t[1]}>
                <line x1={1419} x2={1424} y1={t[0] + 0.5} y2={t[0] + 0.5} stroke="#555" />
                <text x={1464} y={t[0] + 5} textAnchor="end" fill="#666" letterSpacing="0.2">{t[1]}</text>
            </g>
        ))}
        {children}
    </ChartSvg>
)

const MAIN_TICKS = [[54, '7.00'], [81, '6.90'], [107, '6.80'], [135, '6.70'], [161, '6.60'], [189, '6.50'], [215, '6.40'], [269, '6.20'], [297, '6.10'], [323, '6.00'], [351, '5.90'], [378, '5.80'], [405, '5.70'], [431, '5.60'], [460, '5.50'], [486, '5.40'], [514, '5.30'], [540, '5.20']]

const MENU = [
    ['理', 0], ['涨停分析', 41], ['事件驱动', 124], ['|', 189], ['主力监控', 210], ['|', 277], ['深证排名', 298], ['主题投资', 380], ['全球行情', 463],
    ['|', 529], ['股 票 池', 552], ['主题大类', 632], ['跌停分类', 714], ['涨停分类', 797], ['|', 863], ['收益预告', 886], ['区间分析', 966], ['短期分析', 1048], ['|', 1114],
    ['所属板块', 1135], ['主题热点', 1218], ['', 1512]
]

const PERIODS = [['分时', 34], ['1分钟', 39], ['5分钟', 38], ['15分钟', 47], ['30分钟', 45], ['60分钟', 47], ['日线', 34, true], ['周线', 34], ['月线', 32], ['多周期', 44], ['更多 >', 60]]

const RAIL = [
    [['分', '时', '走', '势'], 58], [['技', '术', '分', '析'], 61, true], [['核', '心', '题', '材'], 59], [['大', '智', '慧'], 49], [['东', '财', '操', '盘'], 60],
    [['东', '财', '深', '度'], 60], [['同', '花', '顺', '10'], 58], [['万', '点'], 33], [['智', '能', '点', '评'], 64], [['股', '吧'], 36], [['阿', '牛', '智', '投'], 61],
    [['东', '财', '资', '金'], 59], [['钰', '盈', '网'], 49], [['资', '金', '流', '向'], 58], [['千', '股', '千', '评'], 62], [['新', '浪', '资', '金'], 52]
]

const QUOTES = [
    { h: 91, rows: ['卖五', '卖四', '卖三', '卖二', '卖一'], line: '#c89038' },
    { h: 93, rows: ['买一', '买二', '买三', '买四', '买五'] },
    { h: 98, rows: ['今开', '最高', '最低', '现量', '外盘'] },
    { h: 61, rows: ['换手', '净资', '收益(%'] },
    { h: 80, rows: ['净流入', '大宗流', '5日净', '5日大'] }
]

const TIMES = [...Array(11).fill('14:55'), ...Array(12).fill('14:56'), '15:00']

const MAIN_LEGEND = [
    ['ZK1: 5.76', 57, '#0000ff'], ['ZD1: 5.52', 58, '#ff0000'], ['ZD2: 5.57', 98, '#00ff00'],
    ['高:6.15', 48, '#ff00ff'], ['低:5.47', 47, '#00ff00'], ['一:6.02', 45, '#e0e0e0'], ['二:5.89', 48, '#0000ff'], ['三:5.81', 47, '#e0e0e0'],
    ['四:5.73', 47, '#ff0000'], ['五:5.60', 48, '#ff00ff'], ['顶:7.01', 45, '#ff0000'], ['Z一:6.66', 56, '#ffff00'], ['Z二:6.31', 53, '#ff00ff'],
    ['Z三:6.09', 54, '#e0e0e0'], ['Z四:5.87', 54, '#00ff00'], ['Z五:5.52', 54, '#ffff00'], ['Z低:5.17', 50, '#ff0000']
]

const VOL_LEGEND = [
    ['VOLUME: 177536.52', 120], ['MAVOL1: 184974.48', 115], ['MAVOL2: 402187.94', 116, '#ffff00'], ['量能饱和: 55.70', 109, '#ff9000'],
    ['量: 177536.52', 83], ['换手: 0.06', 59], ['倍量: 0.00', 59, '#ffff00'], ['倍缩: 0.00', 59, '#ff00ff'], ['平量: 0.00', 59], ['低量10: 0.00', 71, '#00ff00'],
    ['低量50: 0.00', 75, '#0000ff'], ['地量: 0.00', 70, '#808080']
]

const ChevronDown = () => (
    <svg width="8" height="6" viewBox="0 0 8 6"><polyline points="1,1 4,4 7,1" fill="none" stroke="#222" strokeWidth="1.6" /></svg>
)

const PanelLegend = ({ title, titleWidth, items }) => (
    <Legend $top={-1}>
        <Collapse><ChevronDown /></Collapse>
        <LegendItem $w={titleWidth}>{title}</LegendItem>
        {items.map(item => <LegendItem key={item[0]} $w={item[1]} $c={item[2]}>{item[0]}</LegendItem>)}
    </Legend>
)

const App = () => (
    <Screen>
        <GlobalStyle />
        <TopMenu>
            {MENU.slice(0, -1).map((m, i) => (
                m[0] === '|'
                    ? <MenuDot key={m[1]} $w={MENU[i + 1][1] - m[1]} />
                    : <MenuItem key={m[1]} $w={MENU[i + 1][1] - m[1]}>{m[0]}</MenuItem>
            ))}
        </TopMenu>
        <Body>
            <LeftRail>
                <RailArrows>
                    <svg width="12" height="7" viewBox="0 0 12 7"><polygon points="6,0 12,7 0,7" fill="#666" /></svg>
                    <svg width="12" height="7" viewBox="0 0 12 7"><polygon points="0,0 12,0 6,7" fill="#666" /></svg>
                </RailArrows>
                {RAIL.map(t => (
                    <RailTab key={t[0].join('')} $h={t[1]} $active={t[2]}>
                        {t[0].map((c, i) => <span key={i}>{c}</span>)}
                    </RailTab>
                ))}
            </LeftRail>
            <Workspace>
                <Toolbar>
                    <PanelToggle>
                        <svg width="13" height="12" viewBox="0 0 13 12">
                            <rect x="0.5" y="0.5" width="12" height="11" rx="2" fill="#3a3a3a" stroke="#9a9a9a" />
                            <rect x="2" y="2" width="4" height="8" fill="#b0b0b0" />
                        </svg>
                    </PanelToggle>
                    <PeriodTab $w={4} />
                    {PERIODS.map(p => <PeriodTab key={p[0]} $w={p[1]} $active={p[2]}>{p[0]}</PeriodTab>)}
                    <PeriodTab $w={689} />
                    <ToolButton>复权</ToolButton>
                    <ToolButton>叠加</ToolButton>
                    <ToolButton>统计</ToolButton>
                </Toolbar>
                <Columns>
                    <ChartColumn>
                        <Panel $h={538}>
                            <PanelChart>
                                <MainChart />
                                <Legend $pad={3}>
                                    <LegendItem $w={126}>中信银行 (日线,前复权)</LegendItem>
                                    <svg width="10" height="12" viewBox="0 0 10 12"><polygon points="5,0 10,6 7,6 7,12 3,12 3,6 0,6" fill="#ff0000" /></svg>
                                    <Collapse $left={5}><ChevronDown /></Collapse>
                                    <LegendItem $w={114}>九转超势主图(3,80)</LegendItem>
                                    {MAIN_LEGEND.map(l => <LegendItem key={l[0]} $w={l[1]} $c={l[2]}>{l[0]}</LegendItem>)}
                                </Legend>
                                <TagLine>银行 北京板块 含H股 含可转债</TagLine>
                            </PanelChart>
                            <PanelAxis>
                                <AxisTicks top={29} height={537} ticks={MAIN_TICKS}>
                                    <rect x={1420} y={230} width={51} height={15} fill="#000080" />
                                    <text x={1421} y={242} fill="#c8c8c8" letterSpacing="0.3">6.29</text>
                                </AxisTicks>
                            </PanelAxis>
                        </Panel>
                        <Panel $h={95}>
                            <PanelChart>
                                <VolumeChart />
                                <PanelLegend title="成交量XT(135,5)" titleWidth={94} items={VOL_LEGEND} />
                            </PanelChart>
                            <PanelAxis>
                                <AxisTicks top={567} height={94} ticks={[[604, '20000'], [633, '10000']]} minor={[619, 648]}>
                                    <rect x={1420.5} y={647.5} width={32} height={14} fill="none" stroke="#444" />
                                    <text x={1423} y={659} fill="#666">X100</text>
                                </AxisTicks>
                            </PanelAxis>
                        </Panel>
                        <Panel $h={97}>
                            <PanelChart>
                                <FourChart />
                                <PanelLegend
                                    title="麟龙四量"
                                    titleWidth={133}
                                    items={[['全绿选股: -2.00', 92, '#ffff00'], ['全红选股: -2.00', 100, '#ff00ff']]}
                                />
                            </PanelChart>
                            <PanelAxis>
                                <AxisTicks top={662} height={96} ticks={[[682, '10.00'], [713, '5.00']]} minor={[698, 729, 745]} />
                            </PanelAxis>
                        </Panel>
                        <Panel $h={86}>
                            <PanelChart>
                                <EnergyChart />
                                <PanelLegend
                                    title="麟龙量能(20)"
                                    titleWidth={74}
                                    items={[['量能饱和度: 55.70', 133], ['VAR1: 80.00', 87, '#ff00ff'], ['买点1: 0.00', 66, '#00ff00'], ['买点2: 0.00', 66, '#808000'], ['加仓: 0.00', 58], ['红柱: -', 50, '#ff0000']]}
                                />
                            </PanelChart>
                            <PanelAxis>
                                <AxisTicks top={760} height={85} ticks={[[790, '100.0'], [817, '50.00']]} minor={[804, 830]} />
                            </PanelAxis>
                        </Panel>
                        <Panel $h={49}>
                            <PanelChart>
                                <DirectionChart />
                                <PanelLegend
                                    title="中期方向"
                                    titleWidth={54}
                                    items={[['中期方向线: -0.10', 103], ['超买线: 0.06', 71, '#ffff00'], ['超卖线: -0.17', 76, '#00ffff'], ['海底捕鱼: 0.00', 90]]}
                                />
                            </PanelChart>
                            <PanelAxis>
                                <AxisTicks top={846} height={48} ticks={[[870, '2.50']]}>
                                    <rect x={1420} y={847} width={49} height={46} fill="none" stroke="#4a4a4a" strokeWidth="2" />
                                </AxisTicks>
                            </PanelAxis>
                        </Panel>
                        <DateBar>
                            <DateCell $w={92} $pad={4}>2019年</DateCell>
                            <DateSelected $w={77}>2019/01/28/—</DateSelected>
                            <DateCell $w={100} />
                            <DateCell $w={193} $mark>3</DateCell>
                            <DateCell $w={192} $mark>4</DateCell>
                            <DateCell $w={183} $mark>5</DateCell>
                            <DateCell $w={175} $mark>6</DateCell>
                            <DateCell $w={210} $mark>7</DateCell>
                            <DateCell $w={179} $mark>8</DateCell>
                            <DatePeriod $w={52}>日线</DatePeriod>
                        </DateBar>
                        <BottomStrip />
                    </ChartColumn>
                    <QuoteColumn>
                        <QuotePrice>5.57</QuotePrice>
                        {QUOTES.map(q => (
                            <QuoteGroup key={q.rows[0]} $h={q.h} $line={q.line}>
                                {q.rows.map(r => <QuoteRow key={r}>{r}</QuoteRow>)}
                            </QuoteGroup>
                        ))}
                        {TIMES.map((t, i) => <TimeRow key={i}>{t}</TimeRow>)}
                    </QuoteColumn>
                </Columns>
            </Workspace>
        </Body>
        <LogoBadge>
            <LogoTop>
                <LogoName>股海网</LogoName>
                {'股票软件资源分享'.split('').map(c => <LogoChar key={c}>{c}</LogoChar>)}
            </LogoTop>
            <LogoUrl>Www.Guhai.com.cn</LogoUrl>
        </LogoBadge>
    </Screen>
)

export default App
